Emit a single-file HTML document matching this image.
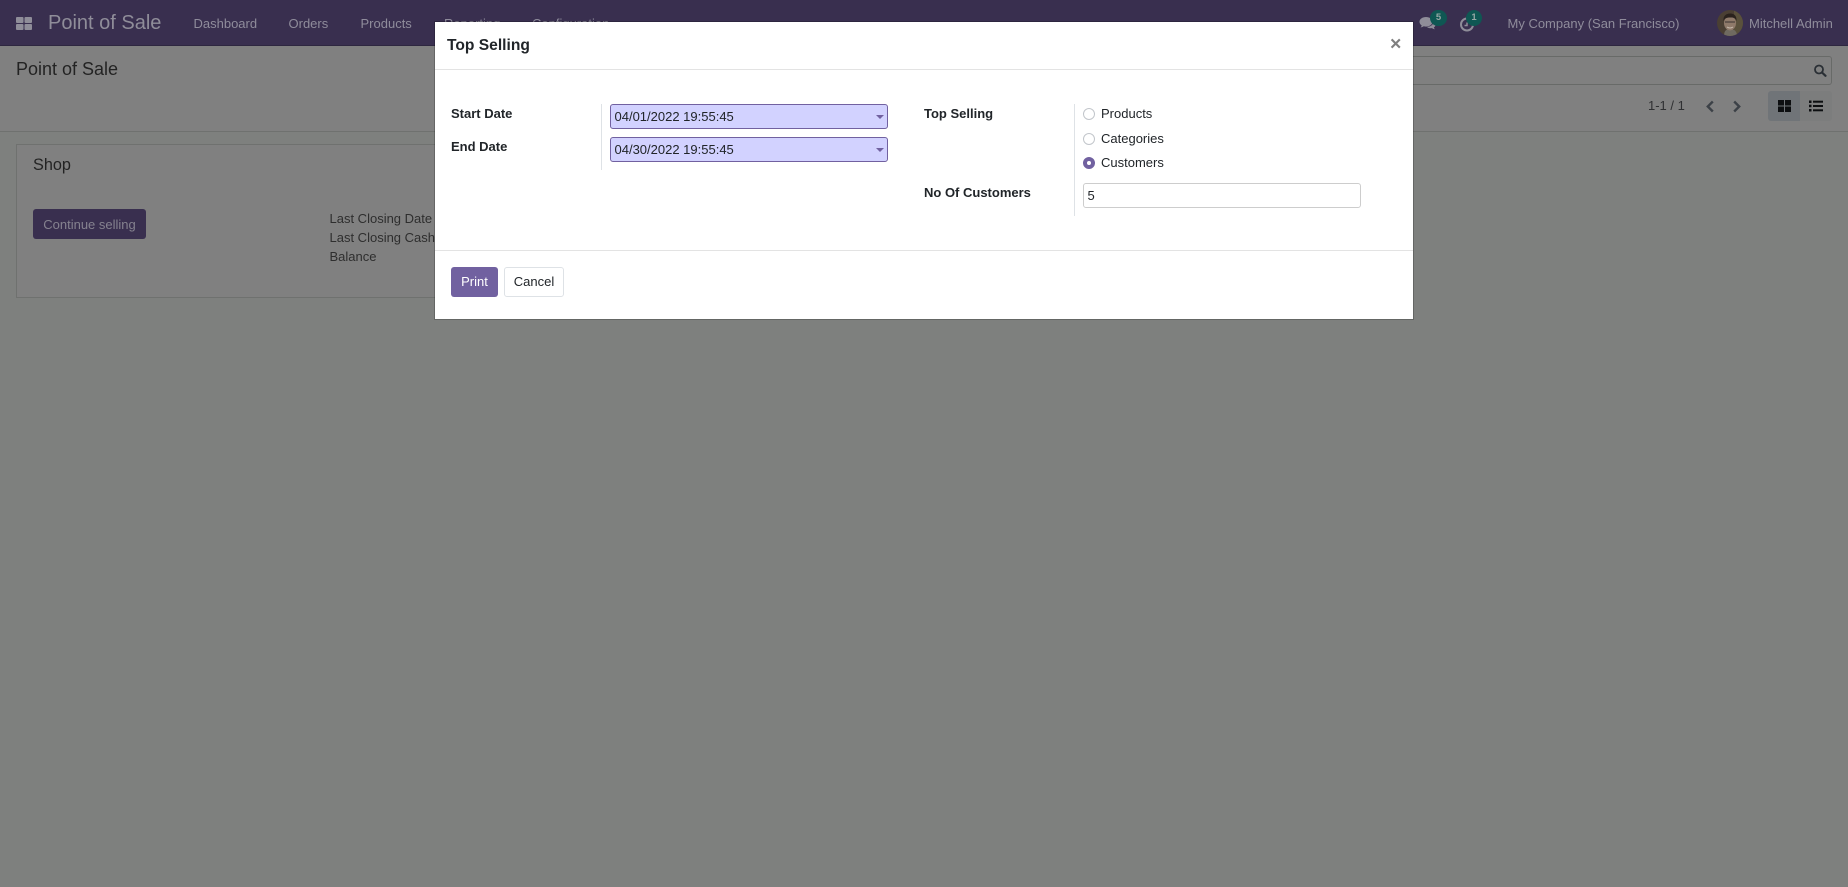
<!DOCTYPE html>
<html><head><meta charset="utf-8"><title>Point of Sale</title>
<style>
html,body{margin:0;padding:0;width:1848px;height:887px;overflow:hidden;background:#7e807e;font-family:"Liberation Sans",sans-serif;font-size:13px;color:#212529}
.a{position:absolute;white-space:nowrap;line-height:20px}
svg{position:absolute;display:block}
.nav{color:#8f8c9b;top:14px}
.lb{font-weight:bold;color:#212529}
.in{position:absolute;box-sizing:border-box;background:#d2d2ff;border:1px solid #7161a0;border-radius:3px;height:25px;width:278px;left:610px;padding-left:3.5px;line-height:23px;color:#212529}
.car{position:absolute;left:876px;width:0;height:0;border-left:4px solid transparent;border-right:4px solid transparent;border-top:4px solid #7161a0}
.sep{position:absolute;width:1px;background:#dee2e6}
.rd{position:absolute;left:1083px;box-sizing:border-box;width:12px;height:12px;border-radius:50%;border:1.5px solid #c2c6cb;background:#fff}
</style></head><body>
<div style="position:absolute;left:0;top:0;width:1848px;height:132px;background:#808080"></div>
<div style="position:absolute;left:0;top:131px;width:1848px;height:1px;background:#6f716f"></div>
<div style="position:absolute;left:0;top:0;width:1848px;height:45px;background:#392f4f;border-bottom:1px solid #2e2740"></div>

<svg style="left:16px;top:17px" width="16" height="13" viewBox="0 0 16 13"><g fill="#8f8d99"><rect width="7.5" height="6" rx="1"/><rect x="8.5" width="7.5" height="6" rx="1"/><rect y="7" width="7.5" height="6" rx="1"/><rect x="8.5" y="7" width="7.5" height="6" rx="1"/></g></svg>
<div class="a" style="left:48px;top:13px;font-size:20px;color:#8f8d99">Point of Sale</div>
<div class="a nav" style="left:193.5px">Dashboard</div>
<div class="a nav" style="left:288.5px">Orders</div>
<div class="a nav" style="left:360.5px">Products</div>
<div class="a nav" style="left:444px">Reporting</div>
<div class="a nav" style="left:532px">Configuration</div>

<svg style="left:1419px;top:16px" width="17" height="15" viewBox="0 0 17 15"><path d="M7 1C3.500 1 .5 3 .5 5.800c0 1.500.9 2.800 2.200 3.700-.2.9-.7 1.500-1.200 2 1.300-.1 2.500-.6 3.300-1.200.7.2 1.400.3 2.200.3 3.500 0 6.500-2 6.500-4.800S10.500 1 7 1z" fill="#8f8d99"/><path d="M14.700 5c.2 3-2.500 5.800-6.700 6 .8.800 2 1.200 3.300 1.200l1.700-.1c.7.600 1.800 1 2.900 1.100-.5-.5-.9-1.100-1-1.800 1.100-.7 1.700-1.700 1.700-2.900 0-1.300-.8-2.500-1.900-3.500z" fill="#8f8d99"/></svg>
<div class="a" style="left:1430px;top:10px;width:17px;height:16px;border-radius:8px;background:#0f5753;color:#97a8a6;font-size:9.500px;font-weight:bold;line-height:16px;text-align:center">5</div>
<svg style="left:1459px;top:16px" width="16" height="16" viewBox="0 0 16 16"><circle cx="8" cy="8.500" r="6" fill="none" stroke="#8f8d99" stroke-width="2"/><path d="M8 6.500v3H5.500" fill="none" stroke="#8f8d99" stroke-width="1.500"/></svg>
<div class="a" style="left:1466px;top:10px;width:16px;height:16px;border-radius:8px;background:#0f5753;color:#97a8a6;font-size:9.500px;font-weight:bold;line-height:16px;text-align:center">1</div>
<div class="a nav" style="left:1507.500px">My Company (San Francisco)</div>
<svg style="left:1717px;top:10px" width="26" height="26" viewBox="0 0 26 26"><defs><clipPath id="c"><circle cx="13" cy="13" r="13"/></clipPath></defs><g clip-path="url(#c)"><rect width="26" height="26" fill="#4a3f33"/><rect x="17" width="9" height="26" fill="#5a513c"/><path d="M7 26c0-5 2-7 6-7s7 2 7 7z" fill="#6f6a60"/><ellipse cx="13" cy="13" rx="6" ry="7.500" fill="#8f7a6a"/><path d="M6.500 11C6 5 10 3.500 13.500 3.500S20 6 19.500 11C18 7.500 16 7.500 13 7.500S8 8 6.500 11z" fill="#2a221d"/><path d="M8 12h10" stroke="#3a3330" stroke-width="1"/><path d="M10 17q3 2 6 0" stroke="#c9bdb0" stroke-width="1" fill="none"/></g></svg>
<div class="a nav" style="left:1749px">Mitchell Admin</div>

<div class="a" style="left:16px;top:58px;font-size:18px;line-height:22px;color:#232323">Point of Sale</div>
<div style="position:absolute;left:1300px;top:56px;width:532px;height:29px;box-sizing:border-box;border:1px solid #686a68;border-left:0;border-radius:0 3px 3px 0"></div>
<svg style="left:1813px;top:64px" width="14" height="14" viewBox="0 0 14 14"><circle cx="6" cy="5.500" r="4" fill="none" stroke="#2a2f35" stroke-width="1.800"/><path d="M9 8.500l3.500 3.300" stroke="#2a2f35" stroke-width="2.200" stroke-linecap="round"/></svg>
<div class="a" style="left:1648px;top:96px;color:#2f3032">1-1 / 1</div>
<svg style="left:1705px;top:100px" width="10" height="13" viewBox="0 0 10 13"><path d="M7.800 1.500L2.800 6.500l5 5" fill="none" stroke="#3c4147" stroke-width="2.400"/></svg>
<svg style="left:1732px;top:100px" width="10" height="13" viewBox="0 0 10 13"><path d="M2.200 1.500l5 5-5 5" fill="none" stroke="#3c4147" stroke-width="2.400"/></svg>
<div style="position:absolute;left:1768px;top:91px;width:32px;height:30px;background:#707478;border-radius:3px 0 0 3px"></div>
<div style="position:absolute;left:1800px;top:91px;width:32px;height:30px;background:#7c7d7d;border-radius:0 3px 3px 0"></div>
<svg style="left:1778px;top:100px" width="13" height="12" viewBox="0 0 13 12"><g fill="#0d0f11"><rect width="6" height="5.500"/><rect x="7" width="6" height="5.500"/><rect y="6.500" width="6" height="5.500"/><rect x="7" y="6.500" width="6" height="5.500"/></g></svg>
<svg style="left:1809px;top:100px" width="14" height="12" viewBox="0 0 14 12"><g fill="#0d0f11"><rect y="0.500" width="2.500" height="2.500"/><rect y="4.700" width="2.500" height="2.500"/><rect y="9" width="2.500" height="2.500"/><rect x="4" y="0.700" width="10" height="2"/><rect x="4" y="5" width="10" height="2"/><rect x="4" y="9.300" width="10" height="2"/></g></svg>

<div style="position:absolute;left:16px;top:144px;width:1300px;height:154px;box-sizing:border-box;border:1px solid #6f716f;background:#808080"></div>
<div class="a" style="left:33px;top:155px;font-size:16.250px;color:#232323">Shop</div>
<div class="a" style="left:33px;top:209px;width:113px;height:30px;background:#392f4f;border-radius:3px;line-height:31px;text-align:center;color:#85828f">Continue selling</div>
<div class="a" style="left:329.500px;top:209px;color:#2e2e2e">Last Closing Date</div>
<div class="a" style="left:329.500px;top:228px;color:#2e2e2e">Last Closing Cash</div>
<div class="a" style="left:329.500px;top:247px;color:#2e2e2e">Balance</div>

<div style="position:absolute;left:435px;top:22px;width:978px;height:297px;background:#fff;box-shadow:0 0 0 1px rgba(0,0,0,.2)"></div>
<div style="position:absolute;left:435px;top:69px;width:978px;height:1px;background:#e3e3e3"></div>
<div style="position:absolute;left:435px;top:250px;width:978px;height:1px;background:#e3e3e3"></div>
<div class="a" style="left:447px;top:36px;font-size:15.600px;font-weight:bold;color:#212529">Top Selling</div>
<div class="a" style="left:1390px;top:34px;font-size:19.500px;font-weight:bold;color:#7f7f7f">×</div>

<div class="a lb" style="left:451px;top:103.500px">Start Date</div>
<div class="a lb" style="left:451px;top:136.500px">End Date</div>
<div class="sep" style="left:601px;top:104px;height:66px"></div>
<div class="in" style="top:104px">04/01/2022 19:55:45</div><div class="car" style="top:115px"></div>
<div class="in" style="top:137px">04/30/2022 19:55:45</div><div class="car" style="top:148px"></div>

<div class="a lb" style="left:924px;top:103.500px">Top Selling</div>
<div class="a lb" style="left:924px;top:182.500px">No Of Customers</div>
<div class="sep" style="left:1074px;top:104px;height:112px"></div>
<div class="rd" style="top:107.500px"></div><div class="a" style="left:1101px;top:103.500px">Products</div>
<div class="rd" style="top:132.500px"></div><div class="a" style="left:1101px;top:128.500px">Categories</div>
<div class="rd" style="top:157px;border:4px solid #7161a0"></div><div class="a" style="left:1101px;top:152.500px">Customers</div>
<div style="position:absolute;box-sizing:border-box;left:1083px;top:183px;width:278px;height:25px;border:1px solid #cdcdcd;border-radius:3px;padding-left:3.500px;line-height:24px;color:#212529">5</div>

<div class="a" style="left:451px;top:267px;width:47px;height:30px;background:#7161a0;border-radius:3px;line-height:30px;text-align:center;color:#fff">Print</div>
<div class="a" style="left:504px;top:267px;width:60px;height:30px;box-sizing:border-box;background:#fff;border:1px solid #dee2e6;border-radius:3px;line-height:28px;text-align:center;color:#212529">Cancel</div>
</body></html>
